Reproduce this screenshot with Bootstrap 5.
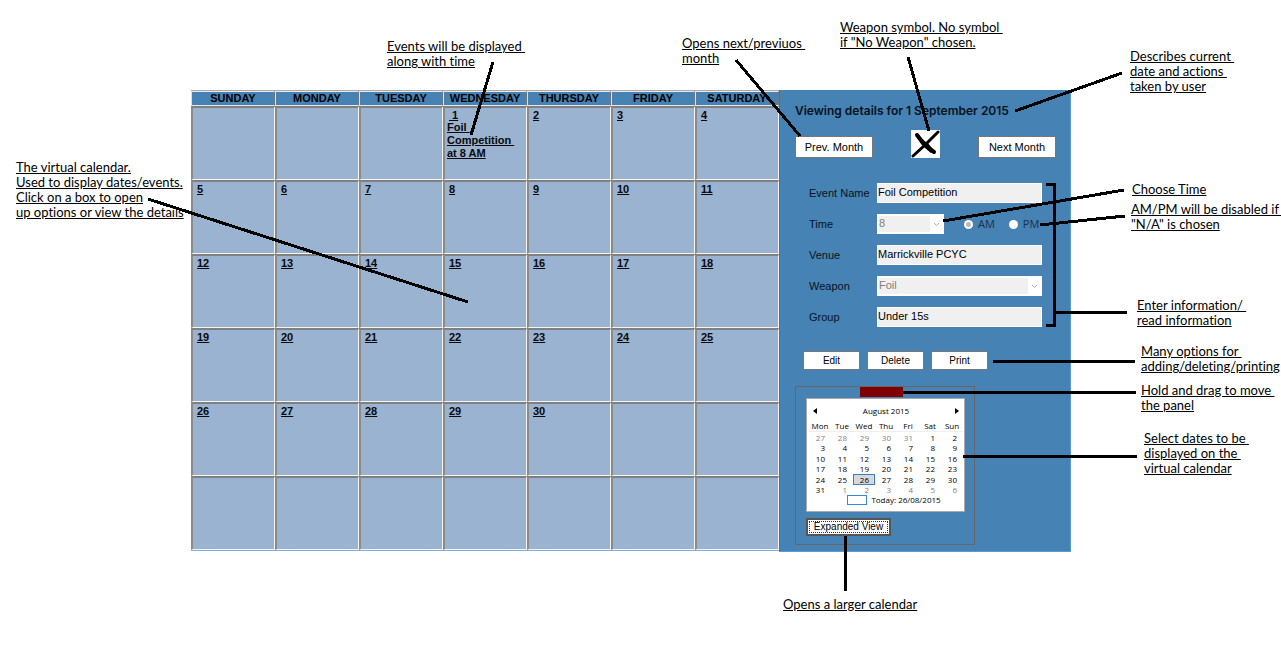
<!DOCTYPE html>
<html lang="en">
<head>
<meta charset="utf-8">
<meta name="viewport" content="width=device-width, initial-scale=1">
<title>Virtual calendar guide</title>
<link href="https://cdn.jsdelivr.net/npm/bootstrap@5.3.0/dist/css/bootstrap.min.css" rel="stylesheet">
<style>
  body { font-family: "Liberation Sans", Arial, sans-serif; font-size: 11px; line-height: 13px; color: #000; background: #fff; }
  .guide { padding: 90px 210px 106px 191px; min-width: 1080px; }
  .steel { background: #4682b4; }

  /* month grid */
  .month-grid { table-layout: fixed; border-collapse: separate; border-spacing: 0; border-top: 1px solid #aaa; border-bottom: 1px solid #7fb0dc; }
  .month-grid th { height: 15px; padding: 0; background: #4682b4; text-align: center; font-weight: bold; border: 1px solid #e8e8e8; border-left-color: #d8dfe6; border-right-color: #777; line-height: 13px; }
  .month-grid td { height: 74px; padding: 1px 2px; vertical-align: top; background: #99b3d1; border: 1px solid #f4f4f4; border-top: 2px solid #808080; border-left: 2px solid #8a8a8a; font-weight: bold; }
  .month-grid a { color: #0a0a0a; display: block; text-decoration: underline; white-space: pre; }
  .month-grid a.day-link { padding-left: 2px; line-height: 12px; }

  /* details panel */
  .details { width: 292px; padding: 13px 14px 6px 16px; box-shadow: inset 1px 0 #3c76a8; border-right: 1px solid #5b9bd5; border-bottom: 1px solid #5b9bd5; }
  .details h1 { font-family: Inter, sans-serif; font-size: 12px; line-height: 16px; font-weight: 600; color: #06121c; margin: 0 0 11px; white-space: nowrap; }
  .flat-btn { background: #fff; border: 1px solid #777; border-radius: 0; color: #000; padding: 0; font-size: 10px; line-height: 14px; width: 57px; height: 19px; }
  .nav-btn { width: 78px; height: 22px; font-size: 11px; }
  .btn-row { gap: 7px; }
  .entry { display: grid; grid-template-columns: 68px 165px; row-gap: 11px; margin: 25px 0 0 14px; align-items: center; }
  .entry label, .entry .opt { color: #04141f; line-height: 20px; }
  .entry input[type=text], .entry select { height: 20px; width: 100%; border: 1px solid #fff; border-radius: 0; background: #f0f0f0; font-size: 11px; line-height: 13px; color: #000; padding: 0 0 3px; outline: 0; appearance: none; }
  .entry select { color: #808080; opacity: 1; padding: 0 14px 1px 0; border-width: 2px;
    background: url("data:image/svg+xml,%3Csvg xmlns='http://www.w3.org/2000/svg' width='7' height='5'%3E%3Cpath d='M1 1l2.500 2.500L6 1' fill='none' stroke='%23aaa'/%3E%3C/svg%3E") right 2px center no-repeat, linear-gradient(to left, #fff 12px, #f0f0f0 12px); }
  .entry select.hour { width: 67px; margin-right: 6px; }
  .entry input[type=radio] { appearance: none; width: 9px; height: 9px; border-radius: 50%; background: #fff; border: 0; margin: 0 5px 0 14px; }
  .entry input[type=radio]:checked { background: radial-gradient(circle, #bbb 2px, #fff 3px); }
  .entry .opt { font-family: "Open Sans", sans-serif; color: #17324a; }

  /* date picker */
  .picker-box { width: 180px; height: 159px; border: 1px solid #666; padding: 0 0 0 10px; margin-top: 16px; }
  .grip { width: 43px; height: 10px; background: #800000; border: 0; padding: 0; margin-left: 54px; display: block; }
  .picker { width: 159px; height: 114px; background: #fff; border: 1px solid #aaa; margin-top: 1px; padding: 7px 1px 0 2px; font-family: "Open Sans", sans-serif; font-size: 8px; line-height: 10px; color: #000; }
  .picker button { border: 0; background: none; padding: 0; line-height: 0; }
  .picker table { table-layout: fixed; width: 154px; border-collapse: separate; border-spacing: 0; margin-top: 4px; }
  .picker th { font-weight: normal; text-align: center; padding: 0; height: 12px; line-height: 11px; border-bottom: 1px solid #eee; }
  .picker td { text-align: right; padding: 0 6px 0 0; height: 10px; line-height: 10px; }
  .picker tr:nth-child(odd) td { height: 11px; }
  .picker .off { color: #808080; }
  .picker .sel { background: #d8d8d8; box-shadow: inset 0 0 0 1px #3a7fc8; }
  .today-box { width: 20px; height: 10px; border: 1px solid #3a86d8; }
  .wide-btn { width: 85px; height: 18px; border: 2px solid #555; margin-top: 6px; line-height: 12px; outline: 1px dotted #333; outline-offset: -4px; }

  /* callouts: notes and pointer lines lying over the window */
  .note { position: absolute; margin: 0; font-family: Lato, sans-serif; font-size: 13px; font-variant-ligatures: none; line-height: 15px; color: #000; text-decoration: underline; white-space: pre; z-index: 3; }
  .pointers { position: absolute; left: 0; top: 0; width: 1px; height: 1px; overflow: visible; z-index: 2; pointer-events: none; fill: none; stroke: #000; stroke-width: 3; shape-rendering: crispEdges; }
  .n-virtual { left: -175px; top: 70px; }
  .n-events { left: 196px; top: -51px; }
  .n-month { left: -97px; top: -54px; }
  .n-weapon { left: 61px; top: -70px; }
  .n-describe { left: 351px; top: -41px; }
  .n-time { left: 353px; top: 92px; }
  .n-ampm { left: 352px; top: 112px; }
  .n-enter { left: 358px; top: 208px; }
  .n-options { left: 362px; top: 254px; }
  .n-drag { left: 362px; top: 293px; }
  .n-select { left: 365px; top: 341px; }
  .n-larger { left: 4px; top: 507px; }
</style>
</head>
<body>
<main class="guide">
  <div class="d-flex">
    <section class="position-relative flex-grow-1" aria-label="Calendar">
      <table class="month-grid w-100">
        <thead><tr><th>SUNDAY</th><th>MONDAY</th><th>TUESDAY</th><th>WEDNESDAY</th><th>THURSDAY</th><th>FRIDAY</th><th>SATURDAY</th></tr></thead>
        <tbody>
          <tr><td></td><td></td><td></td><td><a class="day-link" href="#"> 1</a><a href="#">Foil 
Competition 
at 8 AM</a></td><td><a class="day-link" href="#">2</a></td><td><a class="day-link" href="#">3</a></td><td><a class="day-link" href="#">4</a></td></tr>
          <tr><td><a class="day-link" href="#">5</a></td><td><a class="day-link" href="#">6</a></td><td><a class="day-link" href="#">7</a></td><td><a class="day-link" href="#">8</a></td><td><a class="day-link" href="#">9</a></td><td><a class="day-link" href="#">10</a></td><td><a class="day-link" href="#">11</a></td></tr>
          <tr><td><a class="day-link" href="#">12</a></td><td><a class="day-link" href="#">13</a></td><td><a class="day-link" href="#">14</a></td><td><a class="day-link" href="#">15</a></td><td><a class="day-link" href="#">16</a></td><td><a class="day-link" href="#">17</a></td><td><a class="day-link" href="#">18</a></td></tr>
          <tr><td><a class="day-link" href="#">19</a></td><td><a class="day-link" href="#">20</a></td><td><a class="day-link" href="#">21</a></td><td><a class="day-link" href="#">22</a></td><td><a class="day-link" href="#">23</a></td><td><a class="day-link" href="#">24</a></td><td><a class="day-link" href="#">25</a></td></tr>
          <tr><td><a class="day-link" href="#">26</a></td><td><a class="day-link" href="#">27</a></td><td><a class="day-link" href="#">28</a></td><td><a class="day-link" href="#">29</a></td><td><a class="day-link" href="#">30</a></td><td></td><td></td></tr>
          <tr><td></td><td></td><td></td><td></td><td></td><td></td><td></td></tr>
        </tbody>
      </table>
      <svg class="pointers" aria-hidden="true"><path d="M302-28L280 45M-43 109L277 212"/></svg>
      <p class="note n-virtual">The virtual calendar.
Used to display dates/events.
Click on a box to open
up options or view the details</p>
      <p class="note n-events">Events will be displayed 
along with time</p>
    </section>

    <section class="details steel position-relative flex-shrink-0" aria-label="Details">
      <h1>Viewing details for 1 September 2015</h1>
      <div class="d-flex justify-content-between align-items-end">
        <button class="btn flat-btn nav-btn" type="button">Prev. Month</button>
        <svg width="29" height="28" viewBox="0 0 29 28" role="img" aria-label="Weapon"><path fill="#fff" d="M0 0h29v28H0z"/><path d="M2 26L14 15L27 2" stroke="#000" stroke-width="3" stroke-linecap="round" fill="none"/><path d="M6 5Q13 15 23 22" stroke="#000" stroke-width="4" stroke-linecap="round" fill="none"/><path d="M7 8q2 6 7 10l6 5 3-2-6-8z"/></svg>
        <button class="btn flat-btn nav-btn" type="button">Next Month</button>
      </div>
      <form class="entry">
        <label for="ev">Event Name</label><input id="ev" type="text" value="Foil Competition" readonly>
        <label for="hr">Time</label>
        <div class="d-flex align-items-center">
          <select id="hr" class="hour" disabled><option>8</option></select>
          <input type="radio" name="half" id="am" checked disabled><label class="opt" for="am">AM</label>
          <input type="radio" name="half" id="pm" disabled><label class="opt" for="pm">PM</label>
        </div>
        <label for="ve">Venue</label><input id="ve" type="text" value="Marrickville PCYC" readonly>
        <label for="we">Weapon</label><select id="we" disabled><option>Foil</option></select>
        <label for="gr">Group</label><input id="gr" type="text" value="Under 15s" readonly>
      </form>
      <div class="d-flex mt-4 ps-2 btn-row">
        <button class="btn flat-btn" type="button">Edit</button>
        <button class="btn flat-btn" type="button">Delete</button>
        <button class="btn flat-btn" type="button">Print</button>
      </div>
      <div class="picker-box">
        <button class="grip" type="button" aria-label="Move panel"></button>
        <div class="picker">
          <div class="d-flex justify-content-between align-items-center px-1">
            <button type="button" aria-label="Previous"><svg width="4" height="6"><path d="M4 0v6L0 3z"/></svg></button>
            <span>August 2015</span>
            <button type="button" aria-label="Next"><svg width="4" height="6"><path d="M0 0v6l4-3z"/></svg></button>
          </div>
          <table>
            <thead><tr><th>Mon</th><th>Tue</th><th>Wed</th><th>Thu</th><th>Fri</th><th>Sat</th><th>Sun</th></tr></thead>
            <tbody>
              <tr><td class="off">27</td><td class="off">28</td><td class="off">29</td><td class="off">30</td><td class="off">31</td><td>1</td><td>2</td></tr>
              <tr><td>3</td><td>4</td><td>5</td><td>6</td><td>7</td><td>8</td><td>9</td></tr>
              <tr><td>10</td><td>11</td><td>12</td><td>13</td><td>14</td><td>15</td><td>16</td></tr>
              <tr><td>17</td><td>18</td><td>19</td><td>20</td><td>21</td><td>22</td><td>23</td></tr>
              <tr><td>24</td><td>25</td><td class="sel">26</td><td>27</td><td>28</td><td>29</td><td>30</td></tr>
              <tr><td>31</td><td class="off">1</td><td class="off">2</td><td class="off">3</td><td class="off">4</td><td class="off">5</td><td class="off">6</td></tr>
            </tbody>
          </table>
          <div class="d-flex justify-content-center align-items-center gap-1 ps-3"><span class="today-box"></span><span>Today: 26/08/2015</span></div>
        </div>
        <button class="btn flat-btn wide-btn d-block" type="button">Expanded View</button>
      </div>
      <svg class="pointers" aria-hidden="true"><path d="M-43-30L21 46M129-33L150 41M343-17L236 21M345 100L164 131M346 126L261 135M267 94H275V235H267M275 222H348M214 271H356M124 302H357M184 366H358M66 446V501"/></svg>
      <p class="note n-month">Opens next/previuos 
month</p>
      <p class="note n-weapon">Weapon symbol. No symbol 
if "No Weapon" chosen.</p>
      <p class="note n-describe">Describes current 
date and actions 
taken by user</p>
      <p class="note n-time">Choose Time</p>
      <p class="note n-ampm">AM/PM will be disabled if 
"N/A" is chosen</p>
      <p class="note n-enter">Enter information/ 
read information</p>
      <p class="note n-options">Many options for 
adding/deleting/printing</p>
      <p class="note n-drag">Hold and drag to move 
the panel</p>
      <p class="note n-select">Select dates to be 
displayed on the 
virtual calendar</p>
      <p class="note n-larger">Opens a larger calendar</p>
    </section>
  </div>
</main>
<script src="https://cdn.jsdelivr.net/npm/bootstrap@5.3.0/dist/js/bootstrap.bundle.min.js"></script>
</body>
</html>
